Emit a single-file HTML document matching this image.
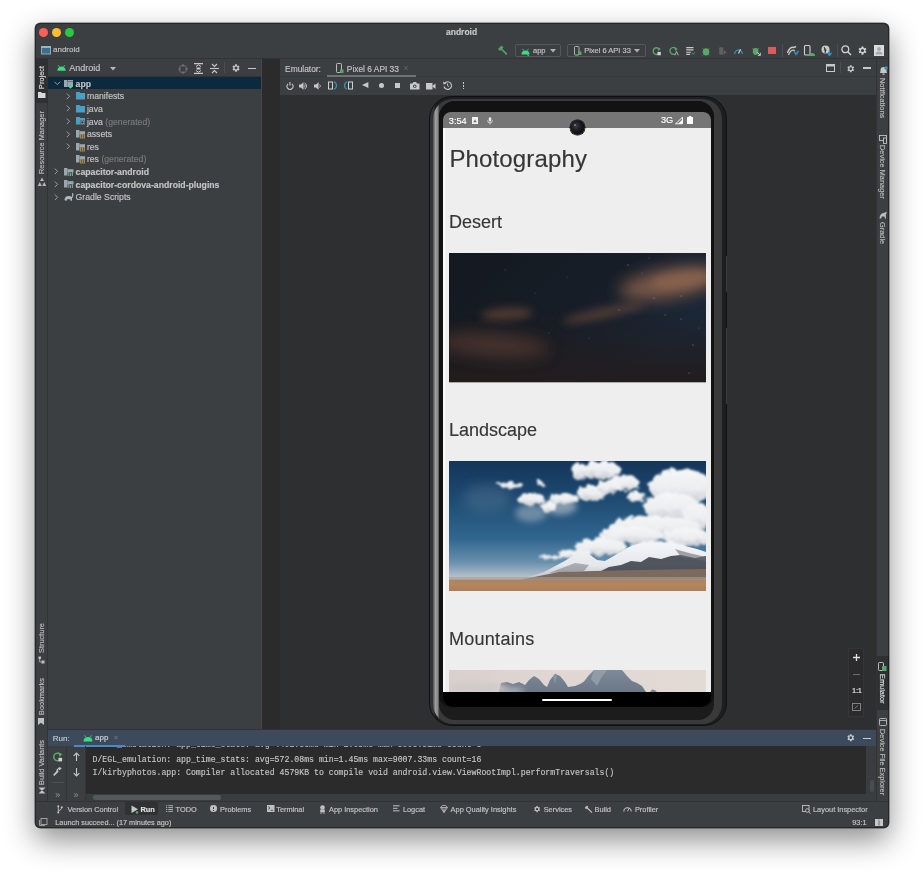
<!DOCTYPE html>
<html><head><meta charset="utf-8">
<style>
*{box-sizing:border-box;margin:0;padding:0}
html,body{width:924px;height:875px;overflow:hidden;background:#fff;font-family:"Liberation Sans",sans-serif}
.a{position:absolute}
#win{position:absolute;left:35px;top:23px;width:854px;height:805px;border-radius:5.5px;overflow:hidden;background:#3c3f41;box-shadow:0 12px 30px rgba(0,0,0,.45),0 0 0 0.5px rgba(0,0,0,.6)}
#in{position:absolute;left:-35px;top:-23px;width:924px;height:875px;will-change:transform}
.t{-webkit-text-stroke:0.15px currentColor}
.t{position:absolute;white-space:nowrap;color:#c4c4c4;font-size:9px;line-height:1}
.tr{font-size:8.7px}
.b{font-weight:bold}
.g{color:#7a7a7a}
.mono{font-family:"Liberation Mono",monospace}
svg.i{position:absolute;overflow:visible}
</style></head><body>
<div id="win"><div id="in">
  <!-- ===== title bar + toolbar ===== -->
  <div class="a" style="left:35px;top:23px;width:855px;height:36px;background:#3c3f41;border-bottom:1px solid #323335"></div>
  <div class="a" style="left:39px;top:28px;width:9px;height:9px;border-radius:50%;background:#fe5f57"></div>
  <div class="a" style="left:52px;top:28px;width:9px;height:9px;border-radius:50%;background:#febc2e"></div>
  <div class="a" style="left:65px;top:28px;width:9px;height:9px;border-radius:50%;background:#28c840"></div>
  <div class="t b" style="left:446px;top:28px;font-size:8.5px;color:#c8c8c8">android</div>
  <svg class="i" style="left:41px;top:46px" width="10" height="8"><rect x="0.5" y="0.5" width="9" height="7.5" fill="#3d6e8f" stroke="#8aa9bd" stroke-width="1"/><rect x="0" y="0" width="10" height="2" fill="#9eb3c2"/></svg>
  <div class="t" style="left:53px;top:46.2px;font-size:8px;color:#c4c4c4">android</div>

  <!-- hammer -->
  <svg class="i" style="left:497px;top:45px" width="11" height="11"><path d="M1 4 L4.5 0.5 L6.5 2.5 L3 6 Z" fill="#55a064"/><path d="M4.3 3.8 L9.8 9.3" stroke="#55a064" stroke-width="1.7"/></svg>
  <!-- app dropdown -->
  <div class="a" style="left:515px;top:43.5px;width:46px;height:13px;border:1px solid #55585b;border-radius:2px"></div>
  <svg class="i" style="left:520.5px;top:47.5px" width="9" height="7"><path d="M0.5 6.5 A4 4 0 0 1 8.5 6.5 Z" fill="#3ddc84"/><path d="M1.5 0.8 L2.8 2.6 M7.5 0.8 L6.2 2.6" stroke="#3ddc84" stroke-width="0.8"/><path d="M6 6.5 L8 8" stroke="#3ddc84" stroke-width="1"/></svg>
  <div class="t" style="left:533px;top:46.6px;font-size:7.5px">app</div>
  <svg class="i" style="left:550px;top:48.5px" width="6" height="4"><path d="M0 0 H6 L3 3.5Z" fill="#b0b0b0"/></svg>
  <!-- device dropdown -->
  <div class="a" style="left:566.5px;top:43.5px;width:79px;height:13px;border:1px solid #55585b;border-radius:2px"></div>
  <svg class="i" style="left:573.7px;top:46px" width="8" height="10"><rect x="0.5" y="0.5" width="4.5" height="8.5" rx="0.8" fill="none" stroke="#bbbbbb" stroke-width="0.9"/><rect x="4" y="5.5" width="3.5" height="3.5" fill="#59a869"/></svg>
  <div class="t" style="left:584.2px;top:46.6px;font-size:7.5px">Pixel 6 API 33</div>
  <svg class="i" style="left:634px;top:48.5px" width="6" height="4"><path d="M0 0 H6 L3 3.5Z" fill="#b0b0b0"/></svg>

  <!-- run icons -->
  <svg class="i" style="left:652px;top:46px;transform:scale(0.85);transform-origin:50% 50%" width="10" height="10"><path d="M8 3.2 A4 4 0 1 0 7.5 7.8" fill="none" stroke="#59a869" stroke-width="1.6"/><path d="M5.5 0.5 L9.5 2.5 L6.5 5Z" fill="#59a869"/><rect x="5.5" y="6" width="4" height="4" fill="#d0d0d0"/></svg>
  <svg class="i" style="left:669px;top:46px;transform:scale(0.85);transform-origin:50% 50%" width="10" height="10"><path d="M8 3.2 A4 4 0 1 0 6 8.5" fill="none" stroke="#59a869" stroke-width="1.4"/><path d="M5.5 0.5 L9.5 2.5 L6.5 5Z" fill="#59a869"/><path d="M6 10 L8 5.5 L10 10" fill="none" stroke="#c0c0c0" stroke-width="1"/></svg>
  <svg class="i" style="left:685px;top:46px;transform:scale(0.85);transform-origin:50% 50%" width="11" height="10"><path d="M0.5 1 H9 M0.5 3.7 H9 M0.5 6.4 H6 M0.5 9 H5" stroke="#c8c8c8" stroke-width="1.3"/><path d="M7 7 L8.5 9 L10.5 6.5" fill="none" stroke="#59a869" stroke-width="0.9"/></svg>
  <svg class="i" style="left:701px;top:45.5px;transform:scale(0.85);transform-origin:50% 50%" width="10" height="11"><ellipse cx="5" cy="6" rx="3.6" ry="4.2" fill="#59a869"/><path d="M1 2 L3 3.5 M9 2 L7 3.5 M0.5 6 H2 M8 6 H9.5 M1 10 L2.5 8.5 M9 10 L7.5 8.5" stroke="#59a869" stroke-width="0.9"/></svg>
  <svg class="i" style="left:718px;top:46px;transform:scale(0.85);transform-origin:50% 50%" width="10" height="10"><rect x="0.5" y="0.5" width="5" height="9" rx="1" fill="#5d5f61"/><path d="M6 4 L9.5 6.5 L6 9Z" fill="#5d5f61"/></svg>
  <svg class="i" style="left:733px;top:46px;transform:scale(0.85);transform-origin:50% 50%" width="11" height="9"><path d="M1 8.5 A4.5 4.5 0 1 1 10 8.5" fill="none" stroke="#3592c4" stroke-width="1.5"/><path d="M5.5 8 L8 3" stroke="#d0d0d0" stroke-width="1.3"/></svg>
  <svg class="i" style="left:751px;top:45.5px;transform:scale(0.85);transform-origin:50% 50%" width="11" height="11"><ellipse cx="4.5" cy="5.5" rx="3.3" ry="4" fill="#59a869"/><path d="M0.5 2 L2.5 3.3 M8.5 2 L6.5 3.3" stroke="#59a869" stroke-width="0.9"/><path d="M6.5 6.5 L10 10 M7 10 H10 V7" fill="none" stroke="#d0d0d0" stroke-width="1.1"/></svg>
  <div class="a" style="left:768px;top:47px;width:7.5px;height:7px;background:#db5c5c"></div>
  <div class="a" style="left:782px;top:44px;width:1px;height:13px;background:#4c4f51"></div>
  <svg class="i" style="left:787px;top:45px" width="12" height="11"><path d="M0.5 8 Q3 1 7 2.5 L9 1.5" fill="none" stroke="#c8c8c8" stroke-width="1.4"/><path d="M1.5 10 Q4 4 8 5.5" fill="none" stroke="#c8c8c8" stroke-width="1.2"/><path d="M7 6 L9 9.5 L11.5 6" fill="none" stroke="#3592c4" stroke-width="1.4"/></svg>
  <svg class="i" style="left:804px;top:44.5px" width="11" height="12"><rect x="0.5" y="0.5" width="5.5" height="9.5" rx="1" fill="none" stroke="#d0d0d0" stroke-width="1.1"/><path d="M5 11 A3 3 0 0 1 11 11Z" fill="#59a869"/></svg>
  <svg class="i" style="left:821px;top:45px" width="12" height="11"><circle cx="4.5" cy="4.5" r="4" fill="#c8c8c8"/><path d="M3 2 L5 5 L4 8" stroke="#3c3f41" stroke-width="1"/><path d="M8.5 5 V10 M6.5 8 L8.5 10.5 L10.5 8" fill="none" stroke="#3592c4" stroke-width="1.3"/></svg>
  <div class="a" style="left:837px;top:44px;width:1px;height:13px;background:#4c4f51"></div>
  <svg class="i" style="left:841px;top:45px" width="11" height="11"><circle cx="4.3" cy="4.3" r="3.4" fill="none" stroke="#d0d0d0" stroke-width="1.3"/><path d="M6.8 6.8 L10 10" stroke="#d0d0d0" stroke-width="1.5"/></svg>
  <svg class="i" style="left:857px;top:45px" width="11" height="11" viewBox="0 0 24 24"><path fill="#d0d0d0" d="M19.4 13a7.5 7.5 0 0 0 0-2l2.1-1.6-2-3.5-2.5 1a7.4 7.4 0 0 0-1.7-1L15 3h-4l-.4 2.9a7.4 7.4 0 0 0-1.7 1l-2.5-1-2 3.5L6.6 11a7.5 7.5 0 0 0 0 2l-2.1 1.6 2 3.5 2.5-1c.5.4 1.1.7 1.7 1L11 21h4l.4-2.9c.6-.3 1.2-.6 1.7-1l2.5 1 2-3.5zM13 15.5a3.5 3.5 0 1 1 0-7 3.5 3.5 0 0 1 0 7z" transform="translate(-1 0)"/></svg>
  <div class="a" style="left:874px;top:45px;width:10px;height:10.5px;background:#dcdcdc"></div>
  <svg class="i" style="left:874px;top:45px" width="10" height="11"><circle cx="5" cy="4" r="2" fill="#a8a8a8"/><path d="M1.5 9.5 A3.5 3 0 0 1 8.5 9.5Z" fill="#a8a8a8"/></svg>

  <!-- ===== left stripe ===== -->
  <div class="a" style="left:35px;top:59px;width:13px;height:742px;background:#3c3f41;border-right:1px solid #323335"></div>
  <div class="a" style="left:35.5px;top:59px;width:12px;height:44px;background:#2e3032"></div>
  

  <!-- ===== project panel ===== -->
  <div class="a" style="left:48px;top:59px;width:213px;height:671px;background:#3c3f41"></div>
  <div class="a" style="left:48px;top:76px;width:213px;height:1px;background:#323335"></div>
  <svg class="i" style="left:57.3px;top:65.3px" width="9" height="6"><path d="M0.3 5.8 A4.2 4.2 0 0 1 8.7 5.8 Z" fill="#3ddc84"/><path d="M1.2 0.2 L2.6 2 M7.8 0.2 L6.4 2" stroke="#3ddc84" stroke-width="0.8"/></svg>
  <div class="t" style="left:69.3px;top:64.3px;font-size:9px">Android</div>
  <svg class="i" style="left:110px;top:67px" width="6" height="4"><path d="M0 0 H6 L3 3.5Z" fill="#b8b8b8"/></svg>
  <div class="a" style="left:48px;top:77px;width:213px;height:12px;background:#0d293e"></div>
  <!-- tree -->
  <svg class="i" style="left:53.6px;top:81.3px" width="7" height="5"><path d="M0.5 0.8 L3.3 3.6 L6.1 0.8" fill="none" stroke="#a8a8a8" stroke-width="0.9"/></svg>
  <svg class="i" style="left:64.3px;top:78.6px" width="10" height="10"><rect x="0" y="1" width="3.5" height="7" fill="#9aa7b0"/><rect x="3.5" y="2.5" width="5.5" height="5.5" fill="#9aa7b0"/><rect x="4" y="1" width="5" height="1.2" fill="#9aa7b0"/><circle cx="6.5" cy="7.8" r="1.6" fill="#3ddc84"/></svg>
  <div class="t tr b" style="left:75.6px;top:79.7px">app</div>
  <svg class="i" style="left:66.2px;top:92.7px" width="5" height="7"><path d="M0.8 0.5 L3.6 3.3 L0.8 6.1" fill="none" stroke="#a8a8a8" stroke-width="0.9"/></svg>
  <svg class="i" style="left:76.1px;top:91.2px" width="10" height="10"><path d="M0 1 H3.5 L4.5 2 H9 V8.5 H0Z" fill="#4a9fc4"/></svg>
  <div class="t tr" style="left:86.9px;top:92.3px">manifests</div>
  <svg class="i" style="left:66.2px;top:105.3px" width="5" height="7"><path d="M0.8 0.5 L3.6 3.3 L0.8 6.1" fill="none" stroke="#a8a8a8" stroke-width="0.9"/></svg>
  <svg class="i" style="left:76.1px;top:103.8px" width="10" height="10"><path d="M0 1 H3.5 L4.5 2 H9 V8.5 H0Z" fill="#4a9fc4"/></svg>
  <div class="t tr" style="left:86.9px;top:104.9px">java</div>
  <svg class="i" style="left:66.2px;top:117.9px" width="5" height="7"><path d="M0.8 0.5 L3.6 3.3 L0.8 6.1" fill="none" stroke="#a8a8a8" stroke-width="0.9"/></svg>
  <svg class="i" style="left:76.1px;top:116.4px" width="10" height="10"><path d="M0 1 H3.5 L4.5 2 H9 V8.5 H0Z" fill="#4a9fc4"/><circle cx="6.3" cy="6.3" r="2.4" fill="#3c3f41"/><circle cx="6.3" cy="6.3" r="1.6" fill="none" stroke="#aab" stroke-width="0.8"/></svg>
  <div class="t tr" style="left:86.9px;top:117.5px">java <span class="g">(generated)</span></div>
  <svg class="i" style="left:66.2px;top:130.5px" width="5" height="7"><path d="M0.8 0.5 L3.6 3.3 L0.8 6.1" fill="none" stroke="#a8a8a8" stroke-width="0.9"/></svg>
  <svg class="i" style="left:76.1px;top:129.0px" width="10" height="10"><rect x="0" y="1" width="3.5" height="7.5" fill="#9aa7b0"/><rect x="3.5" y="2.2" width="5.5" height="3" fill="#9aa7b0"/><rect x="4" y="5" width="5" height="4.5" fill="#a8864e"/><path d="M5.5 5.5 V9 M7.5 5.5 V9" stroke="#3c3f41" stroke-width="0.6"/></svg>
  <div class="t tr" style="left:86.9px;top:130.1px">assets</div>
  <svg class="i" style="left:66.2px;top:143.1px" width="5" height="7"><path d="M0.8 0.5 L3.6 3.3 L0.8 6.1" fill="none" stroke="#a8a8a8" stroke-width="0.9"/></svg>
  <svg class="i" style="left:76.1px;top:141.6px" width="10" height="10"><rect x="0" y="1" width="3.5" height="7.5" fill="#9aa7b0"/><rect x="3.5" y="2.2" width="5.5" height="3" fill="#9aa7b0"/><rect x="4" y="5" width="5" height="4.5" fill="#a8864e"/><path d="M5.5 5.5 V9 M7.5 5.5 V9" stroke="#3c3f41" stroke-width="0.6"/></svg>
  <div class="t tr" style="left:86.9px;top:142.7px">res</div>
  <svg class="i" style="left:76.1px;top:154.2px" width="10" height="10"><rect x="0" y="1" width="3.5" height="7.5" fill="#9aa7b0"/><rect x="3.5" y="2.2" width="5.5" height="3" fill="#9aa7b0"/><rect x="4" y="5" width="5" height="4.5" fill="#a8864e"/><path d="M5.5 5.5 V9 M7.5 5.5 V9" stroke="#3c3f41" stroke-width="0.6"/></svg>
  <div class="t tr" style="left:86.9px;top:155.3px">res <span class="g">(generated)</span></div>
  <svg class="i" style="left:54.3px;top:168.3px" width="5" height="7"><path d="M0.8 0.5 L3.6 3.3 L0.8 6.1" fill="none" stroke="#a8a8a8" stroke-width="0.9"/></svg>
  <svg class="i" style="left:64.3px;top:166.8px" width="10" height="10"><rect x="0" y="1" width="3.5" height="7.5" fill="#9aa7b0"/><rect x="3.5" y="2.2" width="6" height="3" fill="#9aa7b0"/><path d="M4.8 5 V9 M6.6 6 V9 M8.4 5 V9" stroke="#7fb09a" stroke-width="1"/></svg>
  <div class="t tr b" style="left:75.6px;top:167.9px">capacitor-android</div>
  <svg class="i" style="left:54.3px;top:180.9px" width="5" height="7"><path d="M0.8 0.5 L3.6 3.3 L0.8 6.1" fill="none" stroke="#a8a8a8" stroke-width="0.9"/></svg>
  <svg class="i" style="left:64.3px;top:179.4px" width="10" height="10"><rect x="0" y="1" width="3.5" height="7.5" fill="#9aa7b0"/><rect x="3.5" y="2.2" width="6" height="3" fill="#9aa7b0"/><path d="M4.8 5 V9 M6.6 6 V9 M8.4 5 V9" stroke="#7fb09a" stroke-width="1"/></svg>
  <div class="t tr b" style="left:75.6px;top:180.5px">capacitor-cordova-android-plugins</div>
  <svg class="i" style="left:54.3px;top:193.5px" width="5" height="7"><path d="M0.8 0.5 L3.6 3.3 L0.8 6.1" fill="none" stroke="#a8a8a8" stroke-width="0.9"/></svg>
  <svg class="i" style="left:64.3px;top:192.0px" width="10" height="10"><path d="M0.3 8.8 Q0.5 4 4.5 4 Q7 4 7.5 5 Q8.5 3.5 8 2 Q7.6 1.2 8.6 1 Q9.8 1.5 9.4 3 Q9 5 8 6.5 L8 8.8 H6.6 L6.4 7.2 H3 L2.8 8.8 H1.4 L1.2 7.5Z" fill="#b0b8bf"/></svg>
  <div class="t tr" style="left:75.6px;top:193.1px">Gradle Scripts</div>

  <!-- project header icons -->
  <svg class="i" style="left:177.5px;top:63.5px" width="10" height="10"><circle cx="5" cy="5" r="3.8" fill="none" stroke="#6e7072" stroke-width="1"/><path d="M5 0 V3 M5 7 V10 M0 5 H3 M7 5 H10" stroke="#6e7072" stroke-width="1"/></svg>
  <svg class="i" style="left:194px;top:63px" width="9" height="11"><path d="M0 0.6 H9 M0 10.4 H9" stroke="#c8c8c8" stroke-width="1.1"/><path d="M2 3.5 L4.5 1.8 L7 3.5 M2 7.5 L4.5 9.2 L7 7.5" fill="none" stroke="#c8c8c8" stroke-width="1"/><rect x="2.5" y="4.5" width="4" height="2" fill="#c8c8c8"/></svg>
  <svg class="i" style="left:210px;top:63px" width="9" height="11"><path d="M0 5.5 H9" stroke="#c8c8c8" stroke-width="1.1"/><path d="M2 1 L4.5 3.5 L7 1 M2 10 L4.5 7.5 L7 10" fill="none" stroke="#c8c8c8" stroke-width="1.1"/></svg>
  <div class="a" style="left:224px;top:62px;width:1px;height:11px;background:#4c4f51"></div>
  <svg class="i" style="left:230.5px;top:63.3px" width="10" height="10" viewBox="0 0 24 24"><path fill="#c8c8c8" d="M19.4 13a7.5 7.5 0 0 0 0-2l2.1-1.6-2-3.5-2.5 1a7.4 7.4 0 0 0-1.7-1L15 3h-4l-.4 2.9a7.4 7.4 0 0 0-1.7 1l-2.5-1-2 3.5L6.6 11a7.5 7.5 0 0 0 0 2l-2.1 1.6 2 3.5 2.5-1c.5.4 1.1.7 1.7 1L11 21h4l.4-2.9c.6-.3 1.2-.6 1.7-1l2.5 1 2-3.5zM13 15.5a3.5 3.5 0 1 1 0-7 3.5 3.5 0 0 1 0 7z" transform="translate(-1 0)"/></svg>
  <div class="a" style="left:247.5px;top:67.6px;width:8px;height:1.3px;background:#c8c8c8"></div>

  <!-- ===== emulator panel ===== -->
  <div class="a" style="left:261px;top:59px;width:19px;height:671px;background:#2b2b2b"></div>
  <div class="a" style="left:260.5px;top:59px;width:1px;height:671px;background:#45484a"></div>
  <div class="a" style="left:280px;top:59px;width:596px;height:36px;background:#3c3f41"></div>
  <div class="a" style="left:280px;top:76px;width:596px;height:1px;background:#35383a"></div>
  <div class="a" style="left:280px;top:94.5px;width:596px;height:1px;background:#323335"></div>
  <div class="a" style="left:280px;top:95px;width:596px;height:635px;background:#2e2f31"></div>
  <div class="t" style="left:285.1px;top:64.6px;font-size:8.4px">Emulator:</div>
  <svg class="i" style="left:336px;top:62.5px" width="8" height="11"><rect x="0.5" y="0.5" width="5" height="9" rx="0.8" fill="none" stroke="#bbbbbb" stroke-width="1"/><rect x="4" y="6.5" width="3.5" height="3.5" fill="#59a869"/></svg>
  <div class="t" style="left:346.8px;top:64.6px;font-size:8.4px">Pixel 6 API 33</div>
  <div class="t" style="left:403.5px;top:63.5px;font-size:8.5px;color:#5e6163">&#215;</div>
  <div class="a" style="left:327px;top:75.3px;width:89px;height:1.6px;background:#6e7275"></div>
  <!-- right header icons -->
  <svg class="i" style="left:826px;top:64px" width="9" height="8"><rect x="0.5" y="0.5" width="8" height="7" fill="none" stroke="#c8c8c8" stroke-width="1"/><rect x="0.5" y="0.5" width="8" height="2" fill="#c8c8c8"/></svg>
  <div class="a" style="left:840px;top:62px;width:1px;height:11px;background:#4c4f51"></div>
  <svg class="i" style="left:846px;top:63.5px" width="9.5" height="9.5" viewBox="0 0 24 24"><path fill="#c8c8c8" d="M19.4 13a7.5 7.5 0 0 0 0-2l2.1-1.6-2-3.5-2.5 1a7.4 7.4 0 0 0-1.7-1L15 3h-4l-.4 2.9a7.4 7.4 0 0 0-1.7 1l-2.5-1-2 3.5L6.6 11a7.5 7.5 0 0 0 0 2l-2.1 1.6 2 3.5 2.5-1c.5.4 1.1.7 1.7 1L11 21h4l.4-2.9c.6-.3 1.2-.6 1.7-1l2.5 1 2-3.5zM13 15.5a3.5 3.5 0 1 1 0-7 3.5 3.5 0 0 1 0 7z" transform="translate(-1 0)"/></svg>
  <div class="a" style="left:863.3px;top:67.3px;width:8px;height:1.3px;background:#c8c8c8"></div>

  <!-- emulator toolbar -->
  <svg class="i" style="left:285.6px;top:81.5px" width="8" height="8"><path d="M2.1 1.9 A3.1 3.1 0 1 0 5.9 1.9" fill="none" stroke="#c8c8c8" stroke-width="1.1"/><path d="M4 0 V3.6" stroke="#c8c8c8" stroke-width="1.1"/></svg>
  <svg class="i" style="left:299px;top:81.8px" width="9" height="8"><path d="M0 2.5 H2 L4.5 0.3 V7.7 L2 5.5 H0Z" fill="#c8c8c8"/><path d="M5.5 1 A3.2 3.2 0 0 1 5.5 7" fill="none" stroke="#c8c8c8" stroke-width="0.9"/><path d="M5 2.7 L6.5 4 L5 5.3" fill="none" stroke="#c8c8c8" stroke-width="0.8"/></svg>
  <svg class="i" style="left:313.6px;top:81.8px" width="7" height="8"><path d="M0 2.5 H2 L4.5 0.3 V7.7 L2 5.5 H0Z" fill="#c8c8c8"/><path d="M5.5 2.5 A1.8 1.8 0 0 1 5.5 5.5" fill="none" stroke="#c8c8c8" stroke-width="0.9"/></svg>
  <svg class="i" style="left:327.8px;top:81.3px" width="9" height="9"><rect x="0.5" y="1" width="4" height="7" fill="none" stroke="#d0d0d0" stroke-width="1"/><path d="M6 0.8 A4 4 0 0 1 6 8.2" fill="none" stroke="#3592c4" stroke-width="1.2"/></svg>
  <svg class="i" style="left:343.8px;top:81.3px" width="9" height="9"><rect x="4.5" y="1" width="4" height="7" fill="none" stroke="#d0d0d0" stroke-width="1"/><path d="M3 0.8 A4 4 0 0 0 3 8.2" fill="none" stroke="#3592c4" stroke-width="1.2"/></svg>
  <svg class="i" style="left:361.8px;top:82.3px" width="7" height="6"><path d="M0 3 L6.4 0 V6Z" fill="#c8c8c8"/></svg>
  <div class="a" style="left:379px;top:83.2px;width:5px;height:5px;border-radius:50%;background:#c8c8c8"></div>
  <div class="a" style="left:395.3px;top:83px;width:5px;height:5px;background:#c8c8c8"></div>
  <svg class="i" style="left:409.9px;top:82.3px" width="9.5" height="7.5"><path d="M0 1.5 H2.5 L3.5 0 H6 L7 1.5 H9.5 V7.5 H0Z" fill="#c8c8c8"/><circle cx="4.75" cy="4.3" r="1.7" fill="#3c3f41"/><circle cx="4.75" cy="4.3" r="0.9" fill="#c8c8c8"/></svg>
  <svg class="i" style="left:426.1px;top:82.6px" width="9.5" height="6.5"><rect x="0" y="0" width="6.5" height="6.5" fill="#c8c8c8"/><path d="M6 3.25 L9.5 0.5 V6Z" fill="#c8c8c8"/></svg>
  <svg class="i" style="left:442.9px;top:81.3px" width="9" height="9"><path d="M1.6 2.4 A3.8 3.8 0 1 1 1 5.5" fill="none" stroke="#c8c8c8" stroke-width="1.1"/><path d="M0 0.5 L0.6 3.5 L3.5 2.8Z" fill="#c8c8c8"/><path d="M4.5 2.5 V4.7 L6 5.5" fill="none" stroke="#c8c8c8" stroke-width="0.9"/></svg>
  <div class="a" style="left:462.6px;top:82.3px;width:1.6px;height:1.6px;background:#c8c8c8"></div>
  <div class="a" style="left:462.6px;top:85.1px;width:1.6px;height:1.6px;background:#c8c8c8"></div>
  <div class="a" style="left:462.6px;top:87.9px;width:1.6px;height:1.6px;background:#c8c8c8"></div>

  <!-- zoom controls -->
  <div class="a" style="left:848px;top:648px;width:16px;height:68.5px;background:#2b2b2d;border:1px solid #333537"></div>
  <svg class="i" style="left:852.5px;top:654.3px" width="7" height="7"><path d="M3.5 0 V7 M0 3.5 H7" stroke="#e0e0e0" stroke-width="1.3"/></svg>
  <div class="a" style="left:852.5px;top:674px;width:7px;height:1px;background:#6a6a6a"></div>
  <div class="t b" style="left:852.3px;top:687.5px;font-size:6.5px;color:#cfcfcf">1:1</div>
  <svg class="i" style="left:852px;top:703px" width="9" height="8"><rect x="0.5" y="0.5" width="8" height="7" fill="none" stroke="#8a8a8a" stroke-width="0.9"/><path d="M2.5 5.5 L6 2.5" stroke="#8a8a8a" stroke-width="0.8"/></svg>

  <!-- ===== right stripe ===== -->
  <div class="a" style="left:876px;top:59px;width:13px;height:742px;background:#3c3f41;border-left:1px solid #323335"></div>
  <div class="a" style="left:876.5px;top:655.5px;width:13px;height:54.5px;background:#2e3032"></div>


  <!-- stripe labels -->
  <div class="t" style="left:37.7px;top:89.3px;font-size:7.4px;color:#dddddd;transform:rotate(-90deg);transform-origin:0 0">Project</div>
  <svg class="i" style="left:38px;top:92.3px" width="8" height="7"><path d="M0 0 H3 L4 1 H7.5 V6 H0Z" fill="#d8d8d8"/></svg>
  <div class="t" style="left:37.7px;top:174px;font-size:7.4px;color:#bbbbbb;transform:rotate(-90deg);transform-origin:0 0">Resource Manager</div>
  <svg class="i" style="left:37.5px;top:176.5px" width="8" height="10"><path d="M4 0.5 L6 4 H2Z M1.8 5 L3.8 9 H-0.2Z M6.2 5 L8.2 9 H4.2Z" fill="#b8b8b8"/></svg>
  <div class="t" style="left:37.7px;top:653.0px;font-size:7.4px;color:#bbbbbb;transform:rotate(-90deg);transform-origin:0 0">Structure</div>
  <svg class="i" style="left:38px;top:655.5px" width="7" height="8"><rect x="0.5" y="0.5" width="2.5" height="2.5" fill="#c0c0c0"/><rect x="3.5" y="4.5" width="3" height="3" fill="#c0c0c0"/><path d="M1.7 3 V6 H3.5" stroke="#c0c0c0" stroke-width="0.8" fill="none"/></svg>
  <div class="t" style="left:37.7px;top:714.5px;font-size:7.4px;color:#bbbbbb;transform:rotate(-90deg);transform-origin:0 0">Bookmarks</div>
  <svg class="i" style="left:38.3px;top:718.3px" width="6" height="7"><path d="M0 0 H6 V7 L3 4.8 L0 7Z" fill="#c0c0c0"/></svg>
  <div class="t" style="left:37.7px;top:784.5px;font-size:7.4px;color:#bbbbbb;transform:rotate(-90deg);transform-origin:0 0">Build Variants</div>
  <svg class="i" style="left:37.5px;top:786.5px" width="8" height="7"><path d="M0.5 0.5 L7.5 0.5 L4 4 Z M0.5 6.5 H7.5 L4 3Z" fill="#c0c0c0"/></svg>

  <div class="t" style="left:885.8px;top:77.6px;font-size:7.4px;color:#bbbbbb;transform:rotate(90deg);transform-origin:0 0">Notifications</div>
  <svg class="i" style="left:878.5px;top:66px" width="9" height="9"><path d="M1 7 Q1.5 6 1.5 4 A3 3 0 0 1 7.5 4 Q7.5 6 8 7Z" fill="#c8c8c8"/><circle cx="7" cy="2" r="1.8" fill="#3592c4"/><rect x="3.5" y="7.5" width="2" height="1.2" fill="#c8c8c8"/></svg>
  <div class="t" style="left:885.8px;top:144.5px;font-size:7.4px;color:#bbbbbb;transform:rotate(90deg);transform-origin:0 0">Device Manager</div>
  <svg class="i" style="left:878.5px;top:134.5px" width="8" height="9"><rect x="0.5" y="0.5" width="7" height="5" fill="none" stroke="#c0c0c0" stroke-width="0.9"/><rect x="4.5" y="3" width="3" height="5.5" fill="#3c3f41" stroke="#c0c0c0" stroke-width="0.9"/></svg>
  <div class="t" style="left:885.8px;top:221.6px;font-size:7.4px;color:#bbbbbb;transform:rotate(90deg);transform-origin:0 0">Gradle</div>
  <svg class="i" style="left:878.5px;top:210.5px" width="8" height="8"><path d="M0.5 7.5 Q0.8 2.5 4.5 2 Q6.5 1.8 7.5 0.5 Q8 2.5 6.8 3.5 L7 7.5 H5.8 L5.6 5.6 H2.6 L2.4 7.5Z" fill="#b8c0c6"/></svg>
  <div class="t" style="left:885.8px;top:674.0px;font-size:7.4px;color:#dddddd;transform:rotate(90deg);transform-origin:0 0">Emulator</div>
  <svg class="i" style="left:878.3px;top:662px" width="9" height="10"><rect x="0.5" y="0.5" width="5" height="8" rx="0.8" fill="none" stroke="#c8c8c8" stroke-width="0.9"/><rect x="4" y="4" width="4.5" height="5" fill="#59a869"/></svg>
  <div class="t" style="left:885.8px;top:729.0px;font-size:7.4px;color:#bbbbbb;transform:rotate(90deg);transform-origin:0 0">Device File Explorer</div>
  <svg class="i" style="left:878.5px;top:717.8px" width="8" height="8"><rect x="0.5" y="0.5" width="7" height="7" rx="0.8" fill="none" stroke="#c0c0c0" stroke-width="0.9"/><path d="M0.5 2.5 H7.5" stroke="#c0c0c0" stroke-width="0.8"/></svg>

  <!-- ===== run panel ===== -->
  <div class="a" style="left:48px;top:729.3px;width:828px;height:16.5px;background:#3d4a5b;border-top:1px solid #323335"></div>
  <div class="t" style="left:52.8px;top:734.5px;font-size:8px;color:#c8ccd0">Run:</div>
  <svg class="i" style="left:82.7px;top:734.5px" width="10" height="7"><path d="M0.5 6.5 A4.5 4.5 0 0 1 9.5 6.5 Z" fill="#3ddc84"/><path d="M1.5 0.3 L3 2.5 M8.5 0.3 L7 2.5" stroke="#3ddc84" stroke-width="0.8"/></svg>
  <div class="t" style="left:95px;top:734.2px;font-size:8px;color:#d0d4d8">app</div>
  <div class="t" style="left:113.5px;top:733.5px;font-size:8px;color:#6c747c">&#215;</div>
  <div class="a" style="left:48px;top:745.8px;width:828px;height:55px;background:#3c3f41"></div>
  <div class="a" style="left:86.3px;top:746px;width:780px;height:48px;background:#2b2b2b;overflow:hidden">
    <div class="t mono" style="left:6.2px;top:-4.8px;font-size:8.21px;color:#b8b8b8">D/EGL_emulation: app_time_stats: avg=4401.33ms min=1.05ms max=9003.91ms count=3</div>
    <div class="t mono" style="left:6.2px;top:9.5px;font-size:8.21px;color:#c4c4c4">D/EGL_emulation: app_time_stats: avg=572.08ms min=1.45ms max=9007.33ms count=16</div>
    <div class="t mono" style="left:6.2px;top:23.2px;font-size:8.21px;color:#c4c4c4">I/kirbyphotos.app: Compiler allocated 4579KB to compile void android.view.ViewRootImpl.performTraversals()</div>
  </div>
  <div class="a" style="left:74.2px;top:745.2px;width:51.3px;height:1.6px;background:#4a88c7"></div>
  <div class="a" style="left:86.3px;top:793.8px;width:780px;height:7.2px;background:#3a3d3f"></div>
  <div class="a" style="left:93px;top:794.5px;width:127.5px;height:5.5px;border-radius:3px;background:#55585b"></div>
  <div class="a" style="left:866.3px;top:746px;width:9.7px;height:55px;background:#3a3d3f"></div>
  <div class="a" style="left:870px;top:780px;width:4px;height:12px;border-radius:2px;background:#4a4d50"></div>
  <div class="a" style="left:65.8px;top:746px;width:1px;height:55px;background:#333537"></div>
  <div class="a" style="left:85.3px;top:746px;width:1px;height:55px;background:#333537"></div>
  <div class="a" style="left:51.5px;top:782.3px;width:12.5px;height:1px;background:#4e5153"></div>
  <!-- run icons -->
  <svg class="i" style="left:53.3px;top:751.5px" width="10" height="10"><path d="M7.8 3 A3.8 3.8 0 1 0 6.5 8.2" fill="none" stroke="#59a869" stroke-width="1.5"/><path d="M5.3 0.3 L9.3 2.2 L6.3 4.8Z" fill="#59a869"/><rect x="5.5" y="5.8" width="3.6" height="3.6" fill="#d0d0d0"/></svg>
  <svg class="i" style="left:53px;top:767.3px" width="9" height="9"><path d="M1.2 7.8 L4.6 4.4" stroke="#c8c8c8" stroke-width="1.7" stroke-linecap="round"/><path d="M4.2 4.8 A2.9 2.9 0 0 1 8.2 1.2 L6.3 3.1 L5.9 2.1 L6.9 0.9 A2.9 2.9 0 0 0 4.2 4.8Z" fill="#c8c8c8" stroke="#c8c8c8" stroke-width="0.9"/></svg>
  <svg class="i" style="left:72.5px;top:751.8px" width="7" height="9"><path d="M3.5 9 V1 M0.7 3.8 L3.5 1 L6.3 3.8" fill="none" stroke="#c8c8c8" stroke-width="1.1"/></svg>
  <svg class="i" style="left:72.5px;top:768.3px" width="7" height="9"><path d="M3.5 0 V8 M0.7 5.2 L3.5 8 L6.3 5.2" fill="none" stroke="#c8c8c8" stroke-width="1.1"/></svg>
  <div class="t" style="left:55.3px;top:790.8px;font-size:9px;color:#85888b">&#187;</div>
  <div class="t" style="left:73.5px;top:790.8px;font-size:9px;color:#85888b">&#187;</div>
  <svg class="i" style="left:846px;top:733.3px" width="9.5" height="9.5" viewBox="0 0 24 24"><path fill="#c8ccd0" d="M19.4 13a7.5 7.5 0 0 0 0-2l2.1-1.6-2-3.5-2.5 1a7.4 7.4 0 0 0-1.7-1L15 3h-4l-.4 2.9a7.4 7.4 0 0 0-1.7 1l-2.5-1-2 3.5L6.6 11a7.5 7.5 0 0 0 0 2l-2.1 1.6 2 3.5 2.5-1c.5.4 1.1.7 1.7 1L11 21h4l.4-2.9c.6-.3 1.2-.6 1.7-1l2.5 1 2-3.5zM13 15.5a3.5 3.5 0 1 1 0-7 3.5 3.5 0 0 1 0 7z" transform="translate(-1 0)"/></svg>
  <div class="a" style="left:863.3px;top:737.6px;width:8px;height:1.3px;background:#c8ccd0"></div>

  <!-- ===== bottom toolbar ===== -->
  <div class="a" style="left:35px;top:800.5px;width:855px;height:28px;background:#3c3f41;border-top:1px solid #323335"></div>
  <div class="a" style="left:125px;top:802px;width:32.6px;height:13.2px;background:#2f3133;border-radius:2px"></div>
  <svg class="i" style="left:57px;top:804.5px" width="6" height="9"><circle cx="1.3" cy="1.3" r="1" fill="#c0c0c0"/><circle cx="1.3" cy="7.6" r="1" fill="#c0c0c0"/><circle cx="4.8" cy="2.2" r="1" fill="#c0c0c0"/><path d="M1.3 1.3 V7.6 M4.8 2.2 Q4.8 5 1.3 6" fill="none" stroke="#c0c0c0" stroke-width="0.9"/></svg>
  <div class="t" style="left:67.5px;top:805.5px;font-size:7.4px">Version Control</div>
  <svg class="i" style="left:130.8px;top:804.6px" width="8" height="9"><path d="M0.5 0.5 L7 4.2 L0.5 8Z" fill="#c8c8c8"/><circle cx="6" cy="7.5" r="1.3" fill="#59a869"/></svg>
  <div class="t b" style="left:140.5px;top:805.5px;font-size:7.4px;color:#e0e0e0">Run</div>
  <svg class="i" style="left:165.8px;top:805.2px" width="7" height="7"><path d="M0 0.7 H1.3 M0 2.6 H1.3 M0 4.5 H1.3 M0 6.4 H1.3 M2.3 0.7 H7 M2.3 2.6 H7 M2.3 4.5 H7 M2.3 6.4 H7" stroke="#b8b8b8" stroke-width="0.9"/></svg>
  <div class="t" style="left:175.6px;top:805.5px;font-size:7.4px">TODO</div>
  <div class="a" style="left:210.3px;top:805.3px;width:6.6px;height:6.6px;border-radius:50%;background:#c0c0c0"></div>
  <div class="a" style="left:213.1px;top:806.5px;width:1px;height:2.6px;background:#3c3f41"></div>
  <div class="a" style="left:213.1px;top:809.8px;width:1px;height:1px;background:#3c3f41"></div>
  <div class="t" style="left:220px;top:805.5px;font-size:7.4px">Problems</div>
  <svg class="i" style="left:266.5px;top:805px" width="7.5" height="7"><rect x="0" y="0" width="7.5" height="7" fill="#c0c0c0"/><path d="M1.3 1.6 L3 3 L1.3 4.4 M3.6 5.3 H6" fill="none" stroke="#3c3f41" stroke-width="0.8"/></svg>
  <div class="t" style="left:276.2px;top:805.5px;font-size:7.4px">Terminal</div>
  <svg class="i" style="left:319.3px;top:804.5px" width="7" height="9"><circle cx="3.5" cy="2.5" r="2.3" fill="#c0c0c0"/><rect x="1.2" y="4.5" width="4.6" height="3" fill="#c0c0c0"/><path d="M2 8 V9 M5 8 V9" stroke="#c0c0c0" stroke-width="0.9"/></svg>
  <div class="t" style="left:329px;top:805.5px;font-size:7.4px">App Inspection</div>
  <svg class="i" style="left:393px;top:805.3px" width="7" height="7"><path d="M0 0.8 H6.5 M0 3.3 H4.5 M0 5.8 H6.5" stroke="#c0c0c0" stroke-width="1"/></svg>
  <div class="t" style="left:402.9px;top:805.5px;font-size:7.4px">Logcat</div>
  <svg class="i" style="left:440px;top:804.8px" width="8" height="8"><path d="M0.5 2.5 L2.3 0.5 H5.7 L7.5 2.5 L4 7.5Z M0.5 2.5 H7.5 M2.5 2.5 L4 7.5 L5.5 2.5" fill="none" stroke="#c0c0c0" stroke-width="0.8"/></svg>
  <div class="t" style="left:450.6px;top:805.5px;font-size:7.4px">App Quality Insights</div>
  <svg class="i" style="left:532.8px;top:804.8px" width="8.2" height="8.2" viewBox="0 0 24 24"><path fill="#c0c0c0" d="M19.4 13a7.5 7.5 0 0 0 0-2l2.1-1.6-2-3.5-2.5 1a7.4 7.4 0 0 0-1.7-1L15 3h-4l-.4 2.9a7.4 7.4 0 0 0-1.7 1l-2.5-1-2 3.5L6.6 11a7.5 7.5 0 0 0 0 2l-2.1 1.6 2 3.5 2.5-1c.5.4 1.1.7 1.7 1L11 21h4l.4-2.9c.6-.3 1.2-.6 1.7-1l2.5 1 2-3.5zM13 15.5a3.5 3.5 0 1 1 0-7 3.5 3.5 0 0 1 0 7z" transform="translate(-1 0)"/></svg>
  <div class="t" style="left:543.7px;top:805.5px;font-size:7.4px">Services</div>
  <svg class="i" style="left:584px;top:804.8px" width="8.5" height="8.5"><path d="M0.8 2.8 L3 0.6 L4.4 2 L2.2 4.2Z" fill="#c0c0c0"/><path d="M3.3 3 L8 7.7" stroke="#c0c0c0" stroke-width="1.2"/></svg>
  <div class="t" style="left:594.5px;top:805.5px;font-size:7.4px">Build</div>
  <svg class="i" style="left:623.3px;top:806px" width="9" height="6"><path d="M0.8 5.5 A3.7 3.7 0 0 1 8.2 5.5" fill="none" stroke="#c0c0c0" stroke-width="1.1"/><path d="M4.5 5.3 L6.3 2" stroke="#c0c0c0" stroke-width="1"/></svg>
  <div class="t" style="left:634.9px;top:805.5px;font-size:7.4px">Profiler</div>
  <svg class="i" style="left:801.5px;top:804.6px" width="9" height="9"><rect x="0.5" y="0.5" width="6.5" height="6" fill="none" stroke="#c0c0c0" stroke-width="0.9"/><circle cx="5.3" cy="5.5" r="1.8" fill="#3c3f41" stroke="#c0c0c0" stroke-width="0.9"/><path d="M6.6 6.8 L8.5 8.7" stroke="#c0c0c0" stroke-width="1"/></svg>
  <div class="t" style="left:813px;top:805.5px;font-size:7.4px">Layout Inspector</div>

  <!-- status bar -->
  <svg class="i" style="left:39px;top:818.3px" width="8.5" height="8"><rect x="2" y="0.5" width="6" height="6" fill="none" stroke="#a8a8a8" stroke-width="0.9"/><path d="M0.5 2 V7.5 H6" fill="none" stroke="#a8a8a8" stroke-width="0.9"/></svg>
  <div class="t" style="left:55.3px;top:819px;font-size:7.3px">Launch succeed... (17 minutes ago)</div>
  <div class="t" style="left:852.3px;top:819px;font-size:7.3px">93:1</div>
  <svg class="i" style="left:875px;top:818.5px" width="8" height="7"><path d="M0 0 H3.5 L4 0.8 L4.5 0 H8 V7 H4.5 L4 6.2 L3.5 7 H0Z" fill="#c8c8c8"/><path d="M4 1.5 V6" stroke="#3c3f41" stroke-width="0.7"/></svg>
  <!-- ===== phone ===== -->
  <div class="a" style="left:428.8px;top:96px;width:298px;height:630px;border-radius:23px;background:linear-gradient(to right,#333437 0,#333437 4px,#1d1e20 5px,#1d1e20 100%);border:1px solid #0f1012"></div>
  <div class="a" style="left:432.8px;top:99px;width:289px;height:625px;border-radius:20px;background:linear-gradient(to right,#505050 0,#9c9c9c 2.5px,#8a8a8a 4.5px,#3a3a3a 6.5px,#3a3a3a calc(100% - 8px),#383838 100%)"></div>
  <div class="a" style="left:439px;top:101.4px;width:275.4px;height:619px;border-radius:16px;background:#1c1c1c"></div>
  <div class="a" style="left:439px;top:101.4px;width:275.4px;height:606px;border-radius:16px 16px 12px 12px;background:#121212"></div>
  <div class="a" style="left:725.5px;top:256px;width:1.5px;height:36px;background:#3a3a3a"></div>
  <div class="a" style="left:725.5px;top:328px;width:1.5px;height:76px;background:#3a3a3a"></div>
  <div class="a" style="left:443.4px;top:112px;width:267.3px;height:594.6px;border-radius:8px 8px 10px 10px;background:#000;overflow:hidden">
    <div class="a" style="left:0;top:0;width:267.3px;height:15.5px;background:#757575"></div>
    <div class="a" style="left:0;top:15.5px;width:267.3px;height:564px;background:#eeeeee"></div>
    <div class="a" style="left:0;top:15.5px;width:1.6px;height:564px;background:#fafafa"></div>
    <div class="t" style="left:5.4px;top:4.6px;font-size:9.2px;color:#fff">3:54</div>
    <div class="a" style="left:28.5px;top:5.1px;width:6.1px;height:6.5px;background:#f2f2f2"></div>
    <svg class="i" style="left:29.5px;top:6.6px" width="4" height="3.5"><path d="M0.2 3.3 L2 0.3 L3.8 3.3Z" fill="#777"/></svg>
    <svg class="i" style="left:43.4px;top:4.5px" width="6" height="8"><rect x="1.8" y="0.3" width="2.4" height="4.2" rx="1.2" fill="#eee"/><path d="M0.6 3.5 A2.4 2.4 0 0 0 5.4 3.5 M3 6 V7.5" fill="none" stroke="#eee" stroke-width="0.8"/></svg>
    <div class="t" style="left:217.6px;top:4.2px;font-size:9.2px;color:#fff">3G</div>
    <svg class="i" style="left:231.9px;top:5px" width="8" height="7"><path d="M7.5 0.2 V6.8 H0.5Z" fill="none" stroke="#fff" stroke-width="0.9"/><path d="M7.5 2.5 V6.8 H3Z" fill="#fff"/></svg>
    <svg class="i" style="left:244.1px;top:3.9px" width="6" height="8.2"><rect x="1.8" y="0" width="2.4" height="1.2" fill="#fff"/><rect x="0" y="1" width="6" height="7" rx="0.6" fill="#fff"/></svg>
    <div class="a" style="left:126.8px;top:7.9px;width:15px;height:15px;border-radius:50%;background:radial-gradient(circle at 40% 40%,#3a3d44 0,#15161a 45%,#0a0a0c 100%);box-shadow:0 0 0 0.5px #000"></div>
    <div class="a" style="left:131px;top:12px;width:1.8px;height:1.8px;border-radius:50%;background:#7a7f8a"></div>
    <div class="t" style="left:6px;top:34.7px;font-size:24px;color:#363636;letter-spacing:0.15px">Photography</div>
    <div class="t" style="left:5.6px;top:101.4px;font-size:18px;color:#363636">Desert</div>
    <div class="t" style="left:5.6px;top:308.9px;font-size:18px;color:#363636">Landscape</div>
    <div class="t" style="left:5.5px;top:517.7px;font-size:18px;color:#363636;letter-spacing:0.3px">Mountains</div>
    <svg class="i" style="left:5.8px;top:141.4px;overflow:hidden" width="257" height="129.2" viewBox="0 0 257 129.2">
      <defs>
        <filter id="b6" x="-100%" y="-300%" width="300%" height="700%"><feGaussianBlur stdDeviation="8"/></filter>
        <filter id="b4" x="-100%" y="-300%" width="300%" height="700%"><feGaussianBlur stdDeviation="4.5"/></filter>
        <linearGradient id="dg" x1="0" y1="0" x2="1" y2="0.5"><stop offset="0" stop-color="#141920"/><stop offset="0.55" stop-color="#171d27"/><stop offset="1" stop-color="#1b2838"/></linearGradient>
        <linearGradient id="dg2" x1="0" y1="0" x2="0" y2="1"><stop offset="0.45" stop-color="#211b1c" stop-opacity="0"/><stop offset="1" stop-color="#231c1c" stop-opacity="0.95"/></linearGradient>
      </defs>
      <rect width="257" height="129.2" fill="url(#dg)"/>
      <rect width="257" height="129.2" fill="url(#dg2)"/>
      <ellipse cx="222" cy="30" rx="52" ry="15" transform="rotate(-10 222 30)" fill="#7e5a48" filter="url(#b6)" opacity="0.95"/>
      <ellipse cx="232" cy="27" rx="30" ry="8" transform="rotate(-8 232 27)" fill="#8e6650" filter="url(#b4)" opacity="0.7"/>
      <ellipse cx="155" cy="60" rx="42" ry="5" transform="rotate(-12 155 60)" fill="#5e4438" filter="url(#b4)" opacity="0.8"/>
      <ellipse cx="58" cy="61" rx="26" ry="6" transform="rotate(-4 58 61)" fill="#5e4236" filter="url(#b4)" opacity="0.8"/>
      <ellipse cx="45" cy="92" rx="55" ry="12" transform="rotate(4 45 92)" fill="#4c362e" filter="url(#b6)" opacity="0.9"/>
      <g fill="#b8c4d0" opacity="0.7"><circle cx="179" cy="12" r="0.6"/><circle cx="205" cy="45" r="0.6"/><circle cx="216" cy="62" r="0.5"/><circle cx="232" cy="66" r="0.5"/><circle cx="244" cy="92" r="0.6"/><circle cx="240" cy="120" r="0.5"/><circle cx="170" cy="57" r="0.5"/><circle cx="118" cy="24" r="0.4"/><circle cx="56" cy="17" r="0.4"/><circle cx="100" cy="80" r="0.4"/><circle cx="250" cy="75" r="0.4"/><circle cx="140" cy="85" r="0.4"/><circle cx="200" cy="5" r="0.4"/><circle cx="86" cy="40" r="0.4"/><circle cx="232" cy="43" r="0.5"/><circle cx="193" cy="20" r="0.4"/></g>
    </svg>
    <svg class="i" style="left:5.8px;top:349.4px;overflow:hidden" width="257" height="130" viewBox="0 0 257 130">
      <defs>
        <linearGradient id="sg" x1="0" y1="0" x2="0" y2="1"><stop offset="0" stop-color="#15355a"/><stop offset="0.3" stop-color="#1e4b72"/><stop offset="0.6" stop-color="#31678f"/><stop offset="0.78" stop-color="#6a90ae"/><stop offset="0.87" stop-color="#a6b8c5"/><stop offset="0.92" stop-color="#c4c9cc"/></linearGradient>
        <linearGradient id="gg" x1="0" y1="0" x2="0" y2="1"><stop offset="0" stop-color="#a88466"/><stop offset="0.4" stop-color="#b3865c"/><stop offset="1" stop-color="#ad7e58"/></linearGradient>
        <linearGradient id="cg" x1="0" y1="0" x2="0" y2="1"><stop offset="0" stop-color="#f6f6f7"/><stop offset="0.55" stop-color="#eceef0"/><stop offset="1" stop-color="#c3c8cf"/></linearGradient>
        <linearGradient id="mt" x1="0" y1="0" x2="0" y2="1"><stop offset="0" stop-color="#f4f5f7"/><stop offset="0.6" stop-color="#e4e7eb"/><stop offset="1" stop-color="#b8bec6"/></linearGradient>
        <filter id="c1" x="-20%" y="-40%" width="140%" height="180%"><feTurbulence type="fractalNoise" baseFrequency="0.15" numOctaves="2" seed="5" result="n"/><feDisplacementMap in="SourceGraphic" in2="n" scale="8"/><feGaussianBlur stdDeviation="0.9"/></filter>
        <filter id="c3" x="-100%" y="-100%" width="300%" height="300%"><feGaussianBlur stdDeviation="3"/></filter>
        <filter id="c6" x="-100%" y="-100%" width="300%" height="300%"><feGaussianBlur stdDeviation="6"/></filter>
        <filter id="mb" x="-10%" y="-10%" width="120%" height="120%"><feGaussianBlur stdDeviation="0.6"/></filter>
      </defs>
      <rect width="257" height="130" fill="url(#sg)"/>
      <ellipse cx="38" cy="38" rx="24" ry="14" fill="#4d7190" filter="url(#c6)" opacity="0.5"/>
      <ellipse cx="82" cy="52" rx="16" ry="9" fill="#a7b8c4" filter="url(#c3)" opacity="0.55"/>
      <ellipse cx="112" cy="45" rx="16" ry="9" fill="#c2ccd4" filter="url(#c3)" opacity="0.6"/>
      <g fill="url(#cg)" filter="url(#c1)">
        <ellipse cx="62" cy="24" rx="13" ry="3"/>
        <ellipse cx="82" cy="38" rx="14" ry="6.5"/>
        <circle cx="91.5" cy="22.5" r="2.8"/>
        <ellipse cx="130" cy="10" rx="8" ry="9"/>
        <ellipse cx="152" cy="9" rx="20" ry="9"/>
        <ellipse cx="175" cy="22" rx="15" ry="8"/>
        <ellipse cx="142" cy="32" rx="14" ry="8"/>
        <ellipse cx="116" cy="38" rx="14" ry="6"/>
        <ellipse cx="160" cy="26" rx="12" ry="7"/>
        <ellipse cx="188" cy="36" rx="10" ry="5"/>
        <ellipse cx="100" cy="46" rx="8" ry="6"/>
        <ellipse cx="232" cy="26" rx="32" ry="18"/>
        <ellipse cx="222" cy="46" rx="28" ry="14"/>
        <ellipse cx="248" cy="56" rx="14" ry="14"/>
        <ellipse cx="206" cy="66" rx="46" ry="11"/>
        <ellipse cx="182" cy="74" rx="32" ry="9"/>
        <ellipse cx="238" cy="76" rx="24" ry="9"/>
        <ellipse cx="152" cy="86" rx="26" ry="9"/>
        <ellipse cx="126" cy="93" rx="18" ry="4.5"/>
        <ellipse cx="103" cy="96" rx="14" ry="2"/>
        <ellipse cx="210" cy="86" rx="28" ry="6"/>
      </g>
      <g filter="url(#mb)">
        <path d="M70 119 L95 111 L112 102 L126 94 L133 90.5 L140 93 L148 99 L156 100 L168 93 L180 86 L190 82.5 L222 82.5 L236 85 L248 88 L257 91 V119Z" fill="url(#mt)"/>
        <path d="M148 112 L160 106 L172 104 L182 100 L192 101 L200 96 L212 98 L222 95 L232 94 L246 97 L257 95 V114 H148Z" fill="#40444c" opacity="0.9"/>
        <path d="M226 88 L240 92 L257 96 V100 L246 98 L232 96Z" fill="#6a7078" opacity="0.6"/>
        <path d="M100 112 L126 102 L140 104 L135 110Z" fill="#6e7078" opacity="0.5"/>
        <path d="M70 119 L110 111 L145 110 L190 109 L257 108 V121 H70Z" fill="#7c6b5e"/>
      </g>
      <rect x="0" y="118.5" width="257" height="11.5" fill="url(#gg)"/>
      <rect x="0" y="116" width="257" height="3" fill="#aa9d90" opacity="0.6" filter="url(#mb)"/>
    </svg>
    <svg class="i" style="left:5.8px;top:557.8px;overflow:hidden" width="257" height="22" viewBox="0 0 257 22">
      <defs><linearGradient id="mg" x1="0" y1="0" x2="1" y2="0"><stop offset="0" stop-color="#d8d0cd"/><stop offset="0.4" stop-color="#e0d7d3"/><stop offset="1" stop-color="#e2dad5"/></linearGradient>
      <linearGradient id="rk" x1="0" y1="0" x2="0" y2="1"><stop offset="0" stop-color="#7d8a98"/><stop offset="1" stop-color="#6a7888"/></linearGradient>
      <filter id="m1" x="-100%" y="-300%" width="300%" height="700%"><feGaussianBlur stdDeviation="3"/></filter>
      <filter id="m0" x="-10%" y="-10%" width="120%" height="120%"><feGaussianBlur stdDeviation="0.6"/></filter></defs>
      <rect width="257" height="22" fill="url(#mg)"/>
      <g filter="url(#m0)">
      <path d="M50 22 L52 13 L58 12 L64 14 L70 12 L76 15 L80 10 L85 5.9 L90 9 L95 15 L98 17 L101 10 L106 3.8 L111 6 L116 12 L119 17 L126 16 L131 14 L135 11.6 L140 5 L145 0 L173 0 L178 6 L183 11 L188 13 L193 16 L197 22Z" fill="url(#rk)"/>
      <path d="M145 0 L158 0 L152 8 L148 16 L142 9Z" fill="#9aa6b2" opacity="0.7"/>
      <path d="M104 6 L108 5 L106 14Z" fill="#98a4b0" opacity="0.6"/>
      <path d="M201 22 L203 19.5 L206 20 L208 22Z" fill="#7d8a98"/>
      </g>
      <ellipse cx="28" cy="18" rx="30" ry="5" fill="#cfc9c8" filter="url(#m1)"/>
      <ellipse cx="60" cy="21" rx="16" ry="3" fill="#d5d0cf" filter="url(#m1)" opacity="0.8"/>
    </svg>
    <div class="a" style="left:98.7px;top:586.8px;width:70.4px;height:2.6px;border-radius:1.3px;background:#fff"></div>
  </div>
</div></div>
<div style="position:absolute;left:35px;top:23px;width:854px;height:805px;border-radius:5.5px;border:1px solid rgba(20,20,22,.55);pointer-events:none"></div>
</body></html>
